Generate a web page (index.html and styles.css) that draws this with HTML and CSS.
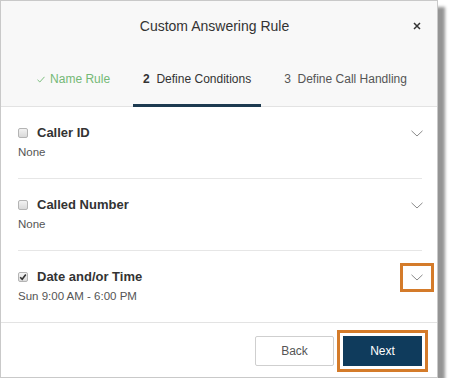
FILE: index.html
```html
<!DOCTYPE html>
<html>
<head>
<meta charset="utf-8">
<link rel="stylesheet" href="styles.css">
</head>
<body>
<div class="dialog">
  <div class="header">
    <div class="title">Custom Answering Rule</div>
    <button class="close" aria-label="Close">
      <svg width="8" height="8" viewBox="0 0 8 8"><path d="M1 1L7 7M7 1L1 7" stroke="#333" stroke-width="1.5" fill="none"/></svg>
    </button>
    <div class="tabs">
      <div class="tab done"><svg class="tick" width="8" height="7" viewBox="0 0 8 7"><path d="M0.5 3.8L2.8 6L7.5 0.8" stroke="#7bbd7d" stroke-width="1" fill="none"/></svg>Name Rule</div>
      <div class="tab active"><b>2</b>&nbsp; Define Conditions</div>
      <div class="tab"><span>3</span>&nbsp; Define Call Handling</div>
    </div>
  </div>

  <div class="rows">
    <div class="row">
      <div class="row-head">
        <span class="cb"></span>
        <span class="row-title">Caller ID</span>
        <span class="chev"><svg width="12" height="7" viewBox="0 0 12 7"><path d="M0.5 0.8L6 6L11.5 0.8" stroke="#8a8a8a" stroke-width="1" fill="none"/></svg></span>
      </div>
      <div class="row-sub">None</div>
    </div>
    <div class="row">
      <div class="row-head">
        <span class="cb"></span>
        <span class="row-title">Called Number</span>
        <span class="chev"><svg width="12" height="7" viewBox="0 0 12 7"><path d="M0.5 0.8L6 6L11.5 0.8" stroke="#8a8a8a" stroke-width="1" fill="none"/></svg></span>
      </div>
      <div class="row-sub">None</div>
    </div>
    <div class="row last">
      <div class="row-head">
        <span class="cb checked"><svg width="8" height="8" viewBox="0 0 8 8"><path d="M1.2 4.2L3.2 6.2L6.8 1.6" stroke="#333" stroke-width="1.6" fill="none"/></svg></span>
        <span class="row-title">Date and/or Time</span>
        <span class="chev highlight"><svg width="12" height="7" viewBox="0 0 12 7"><path d="M0.5 0.8L6 6L11.5 0.8" stroke="#8a8a8a" stroke-width="1" fill="none"/></svg></span>
      </div>
      <div class="row-sub">Sun 9:00 AM - 6:00 PM</div>
    </div>
  </div>

  <div class="footer">
    <button class="btn back">Back</button>
    <button class="btn next highlight">Next</button>
  </div>
</div>
</body>
</html>
```
FILE: styles.css
```css
html, body {
  margin: 0;
  padding: 0;
  background: #ffffff;
}
body {
  font-family: "Liberation Sans", Arial, sans-serif;
  color: #333;
}
.dialog {
  box-sizing: border-box;
  width: 438px;
  height: 378px;
  border: 1px solid #c9c9c9;
  background: #fff;
  box-shadow: 7px 7px 3px rgba(0, 0, 0, 0.42);
  display: flex;
  flex-direction: column;
}
.header {
  position: relative;
  background: #f8f8f8;
  border-bottom: 1px solid #e3e3e3;
  padding-top: 15px;
}
.title {
  font-size: 14px;
  line-height: 20px;
  text-align: center;
  padding-right: 9px;
  color: #333;
}
.close {
  position: absolute;
  top: 19px;
  right: 14px;
  width: 12px;
  height: 12px;
  padding: 0;
  border: 0;
  background: transparent;
  display: flex;
  align-items: center;
  justify-content: center;
}
.tabs {
  margin-top: 34px;
  margin-bottom: -1px;
  display: flex;
  justify-content: center;
  gap: 13px;
  padding-left: 6px;
}
.tab {
  font-size: 12px;
  line-height: 18px;
  padding: 0 10px 16px;
  border-bottom: 3px solid transparent;
  color: #555;
  display: flex;
  align-items: center;
  white-space: nowrap;
}
.tab.done {
  color: #74b976;
}
.tab .tick {
  margin-right: 5px;
  margin-top: 1px;
}
.tab.active {
  color: #333;
  border-bottom-color: #1d3a50;
}
.rows {
  display: flex;
  flex-direction: column;
}
.row {
  margin: 0 15px 0 17px;
  padding: 17px 0 18px;
  border-bottom: 1px solid #e6e6e6;
}
.row.last {
  border-bottom: 0;
}
.row-head {
  display: flex;
  align-items: center;
  height: 18px;
}
.cb {
  box-sizing: border-box;
  width: 10px;
  height: 10px;
  border: 1px solid #b4b4b4;
  border-radius: 2px;
  background: linear-gradient(#f2f2f2, #d9d9d9);
  margin-right: 9px;
  display: flex;
  align-items: center;
  justify-content: center;
}
.cb.checked {
  background: linear-gradient(#f4f4f4, #dcdcdc);
}
.row-title {
  font-size: 13px;
  font-weight: bold;
  line-height: 18px;
  color: #333;
  flex: 1;
}
.chev {
  width: 28px;
  height: 23px;
  margin-right: -9px;
  display: flex;
  align-items: center;
  justify-content: center;
  flex-shrink: 0;
}
.chev.highlight {
  outline: 3px solid #d47b2a;
}
.row-sub {
  margin-top: 3px;
  font-size: 11.5px;
  line-height: 15px;
  color: #555;
}
.footer {
  border-top: 1px solid #e3e3e3;
  padding: 13px 15px 0 0;
  display: flex;
  justify-content: flex-end;
  gap: 9px;
  flex: 1;
}
.btn {
  box-sizing: border-box;
  width: 79px;
  height: 30px;
  font-family: "Liberation Sans", Arial, sans-serif;
  font-size: 12px;
  border-radius: 2px;
  padding: 0;
}
.btn.back {
  background: #fff;
  border: 1px solid #cfcfcf;
  color: #555;
}
.btn.next {
  background: #0f3b5c;
  border: 1px solid #0f3b5c;
  color: #fff;
  border-radius: 0;
}
.btn.highlight {
  outline: 3px solid #d47b2a;
  outline-offset: 3px;
}
```
